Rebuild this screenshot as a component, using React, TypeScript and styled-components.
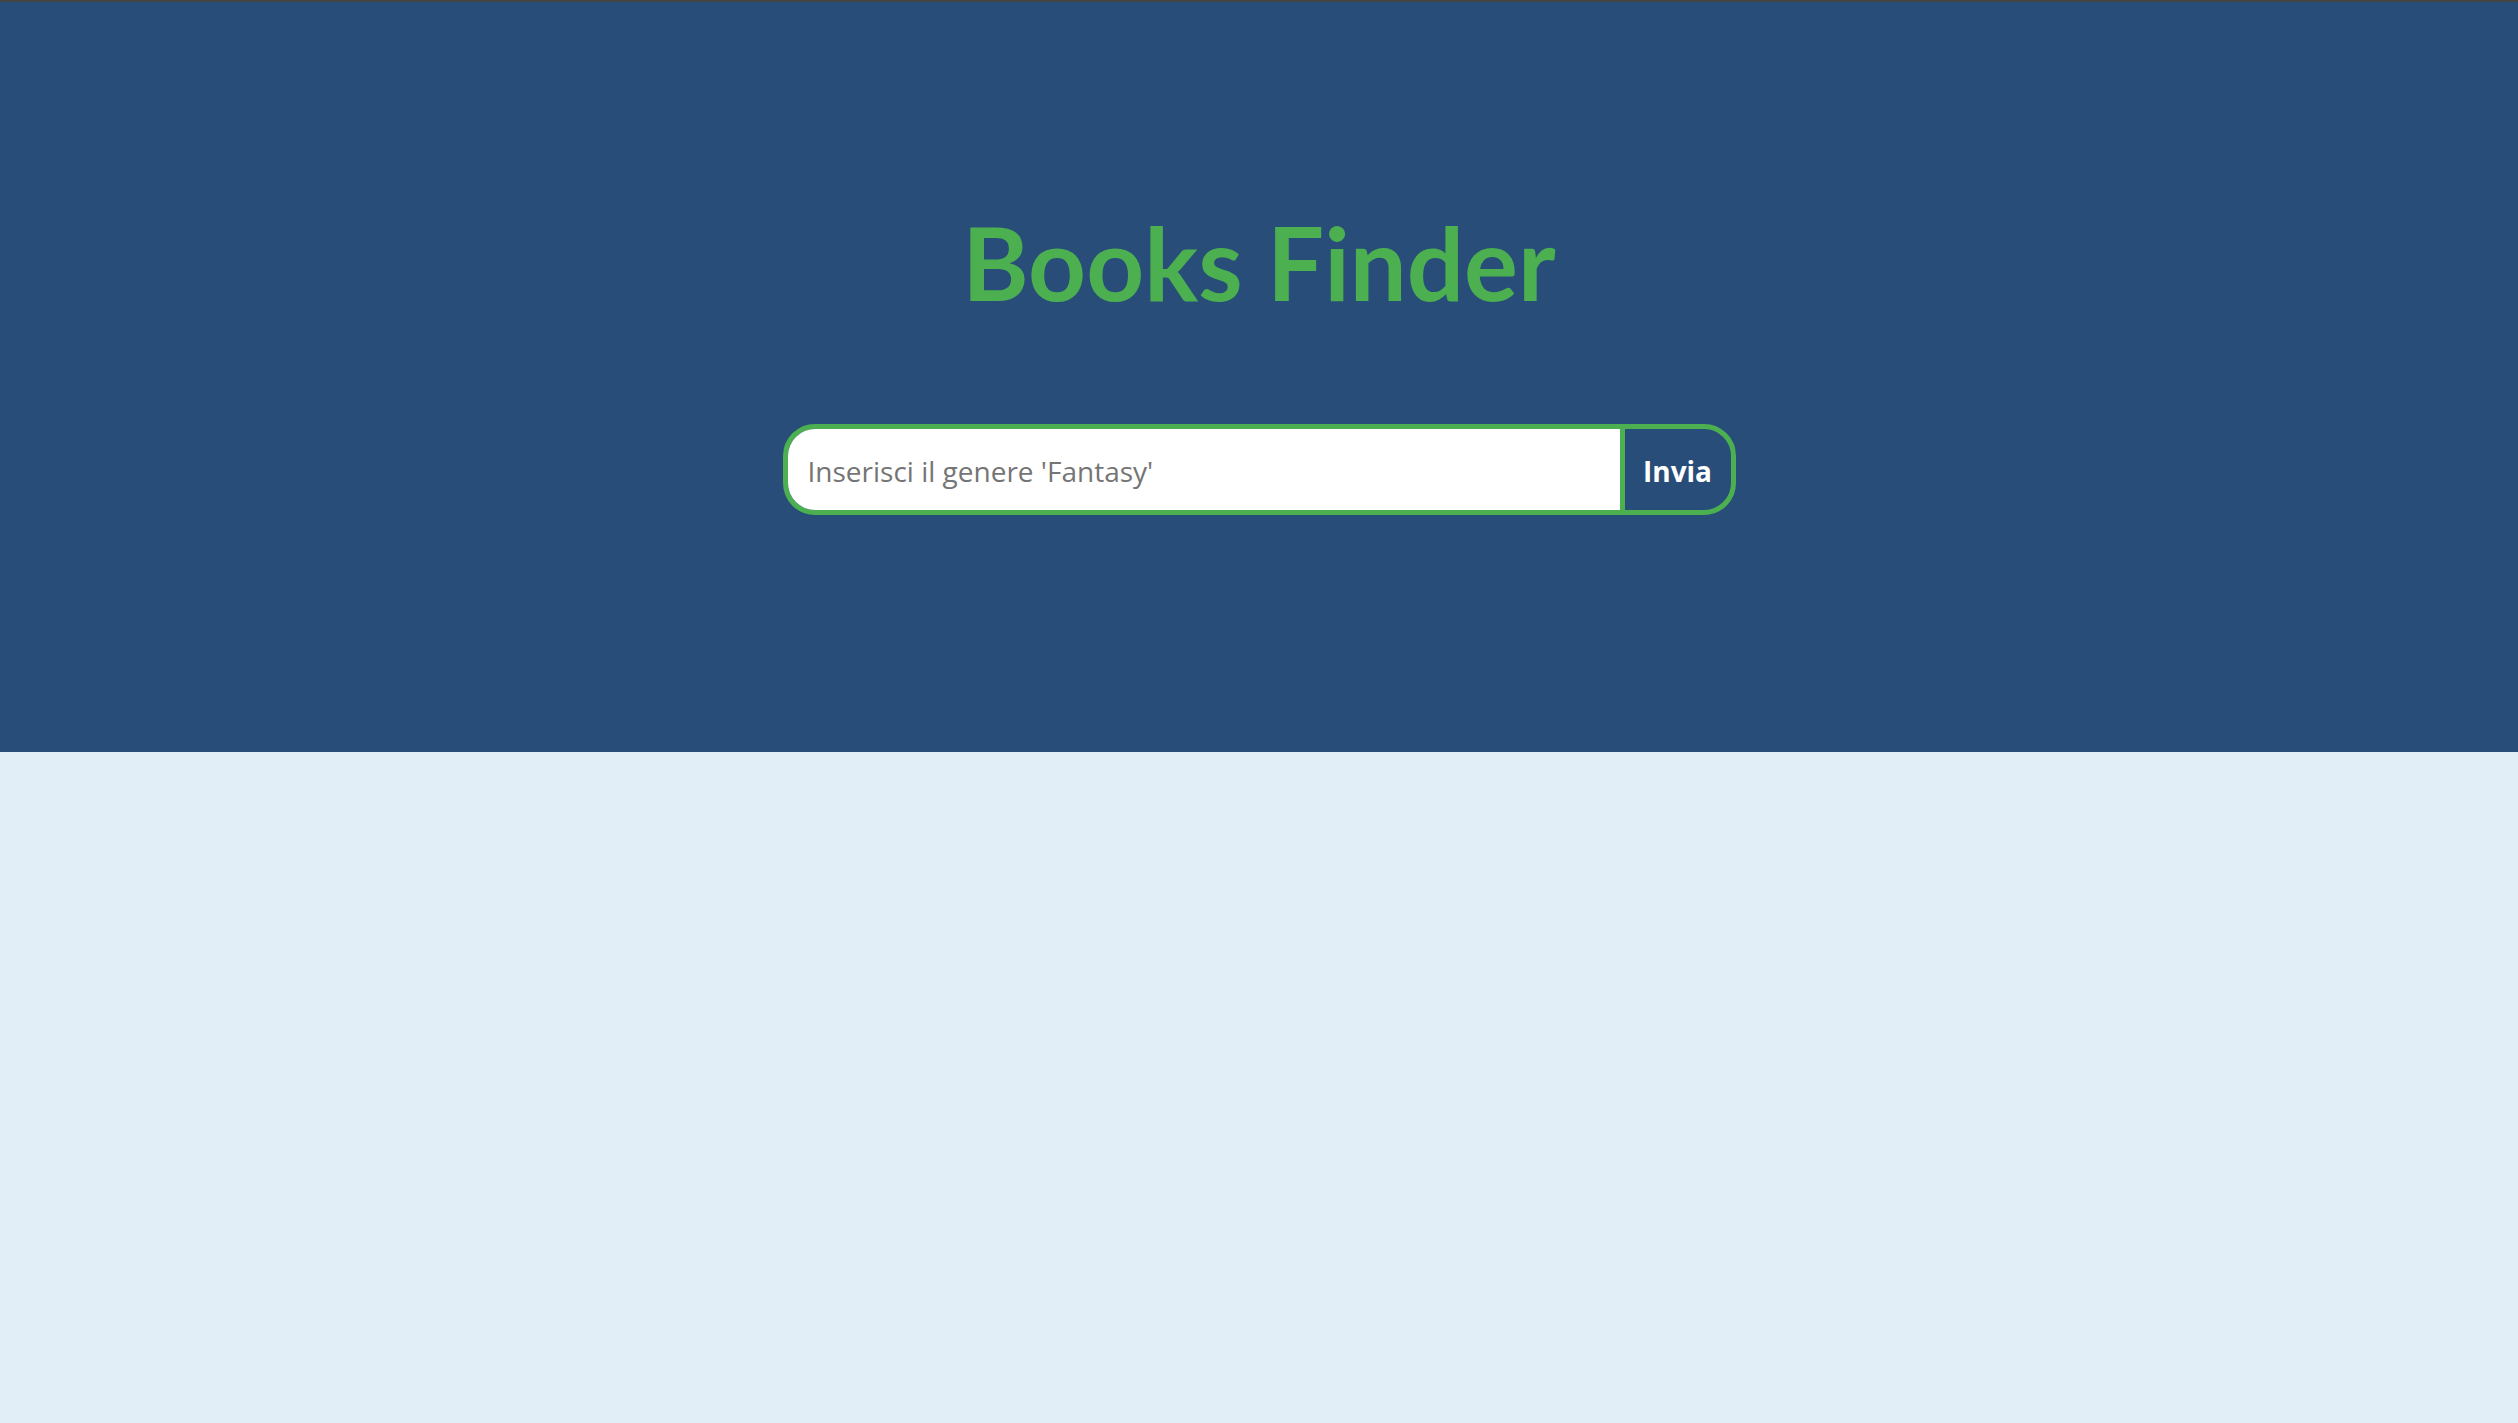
import React from "react";
import styled, { createGlobalStyle } from "styled-components";

const GlobalStyle = createGlobalStyle`
  html, body {
    margin: 0;
    padding: 0;
    background: #e1eef8;
    font-family: "Open Sans", "Noto Sans", sans-serif;
  }
  * { box-sizing: border-box; }
`;

const Page = styled.div`
  min-height: 100vh;
  background: #e1eef8;
  display: flex;
  flex-direction: column;
`;

const Header = styled.header`
  height: 752px;
  background: #274d78;
  border-top: 2px solid #444444;
  display: flex;
  flex-direction: column;
  align-items: center;
  padding-top: 200px;
`;

const Title = styled.h1`
  margin: 0;
  font-family: "Lato", "Open Sans", sans-serif;
  font-weight: 700;
  font-size: 101px;
  line-height: 120px;
  letter-spacing: 0;
  color: #4caf50;
`;

const SearchForm = styled.form`
  margin-top: 102px;
  width: 953px;
  height: 91px;
  display: flex;
  border: 5px solid #4caf50;
  border-radius: 32px;
  overflow: hidden;
`;

const SearchInput = styled.input`
  flex: 1;
  min-width: 0;
  border: none;
  border-right: 5px solid #4caf50;
  background: #ffffff;
  padding: 2px 20px 0;
  font-family: "Open Sans", "Noto Sans", sans-serif;
  font-size: 28px;
  color: #333;
  outline: none;
  &::placeholder {
    color: #757575;
  }
`;

const SubmitButton = styled.button`
  width: 106px;
  border: none;
  background: transparent;
  color: #ffffff;
  font-family: "Open Sans", "Noto Sans", sans-serif;
  font-weight: 700;
  font-size: 28px;
  cursor: pointer;
  padding: 2px 0 0 0;
`;

export default function App() {
  return (
    <Page>
      <GlobalStyle />
      <Header>
        <Title>Books Finder</Title>
        <SearchForm onSubmit={(e) => e.preventDefault()}>
          <SearchInput type="text" placeholder="Inserisci il genere 'Fantasy'" />
          <SubmitButton type="submit">Invia</SubmitButton>
        </SearchForm>
      </Header>
    </Page>
  );
}
